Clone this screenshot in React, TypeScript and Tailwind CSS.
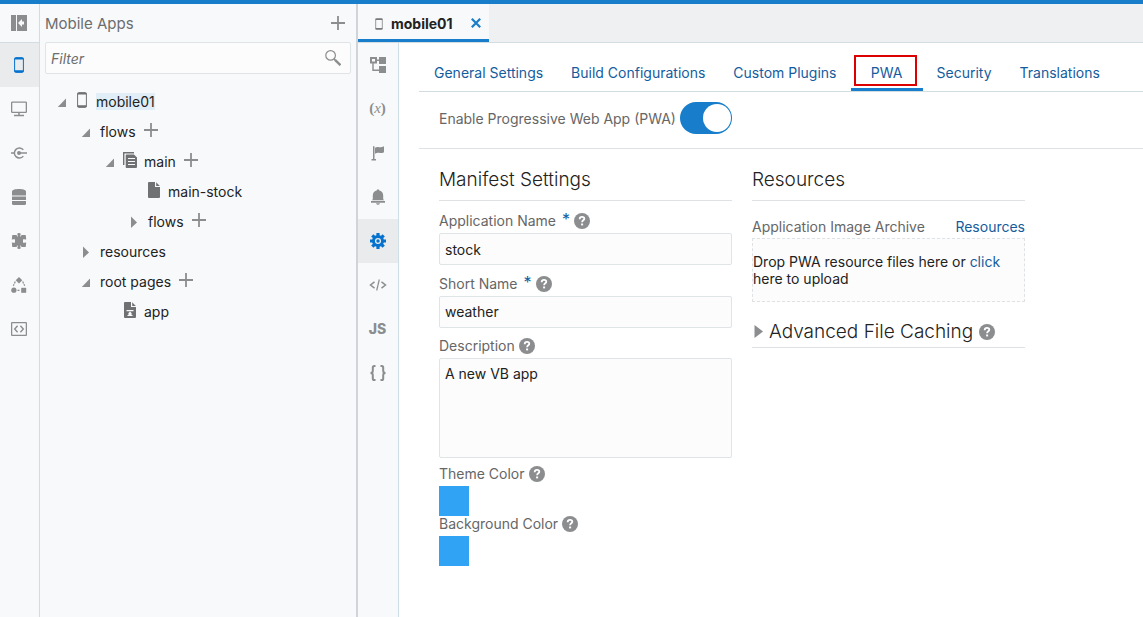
import React, { useState } from "react";

type IconProps = { className?: string };

const PhoneIcon = ({ className = "" }: IconProps) => (
  <svg className={className} width="16" height="16" viewBox="0 0 16 16" aria-hidden="true">
    <rect x="3.6" y="0.6" width="8.8" height="14.8" rx="1" fill="none" stroke="currentColor" strokeWidth="1" />
    <path d="M3.5 1h9v1.6h-9zM3.5 13.2h9V15h-9z" fill="currentColor" />
  </svg>
);

const CollapseIcon = () => (
  <svg width="16" height="16" viewBox="0 0 16 16" fill="currentColor" aria-hidden="true">
    <path d="M0 0h5v16H0zM6 0h10v16H6zM7 8l4-4v2.500h2v3h-2V12z" fillRule="evenodd" />
  </svg>
);

const MonitorIcon = () => (
  <svg width="16" height="16" viewBox="0 0 16 16" fill="none" stroke="currentColor" aria-hidden="true">
    <rect x="0.6" y="1.100" width="14.800" height="10.300" rx="0.800" strokeWidth="1.400" />
    <path d="M8 11v3M3 14.400h10" strokeWidth="1.500" />
  </svg>
);

const ServiceIcon = () => (
  <svg width="16" height="16" viewBox="0 0 16 16" fill="none" stroke="currentColor" aria-hidden="true">
    <path d="M0 8h3.500M8 8h8" strokeWidth="1.400" />
    <path d="M12.300 4.900A5 5 0 1 0 12.300 11.100" strokeWidth="1.500" />
    <circle cx="8" cy="8" r="2" fill="currentColor" stroke="none" />
  </svg>
);

const DatabaseIcon = () => (
  <svg width="16" height="16" viewBox="0 0 16 16" fill="currentColor" aria-hidden="true">
    <path d="M1 2.500C1 .9 4 0 8 0s7 .9 7 2.500V6.500H1zM1 7.500h14v3.500H1zM1 12h14v2.800q0 1.200-1.500 1.200h-11Q1 16 1 14.800z" />
  </svg>
);

const PuzzleIcon = () => (
  <svg width="16" height="16" viewBox="0 0 16 16" fill="currentColor" aria-hidden="true">
    <path d="M4 3.500h8v9H4z" />
    <path d="M1.300 2h4.200l1 2-1.500 2.500L3 6.200.8 6.500zM14.700 2h-4.200l-1 2L11 6.500l2-.3 2.200.3zM1.300 14h4.200l1-2L5 9.500l-2 .3-2.200-.3zM14.700 14h-4.200l-1-2L11 9.500l2 .3 2.200-.3z" />
    <path d="M6.300 1q0-1 1.700-1t1.700 1L8.900 4H7.100zM6.300 15q0 1 1.700 1t1.700-1l-.8-3H7.100z" />
  </svg>
);

const ProcessIcon = () => (
  <svg width="16" height="16" viewBox="0 0 16 16" fill="currentColor" aria-hidden="true">
    <path d="M8 0l3.300 3.200L8 6.400 4.700 3.200z" />
    <circle cx="2.900" cy="13.200" r="2.600" />
    <rect x="10.200" y="10.800" width="5" height="5" />
    <path d="M4.300 4.600L2.300 8.800M11.700 4.600l2 4.200M6.500 13.300h2.800" stroke="currentColor" strokeWidth="1.200" strokeDasharray="2 1" />
  </svg>
);

const CodeBoxIcon = () => (
  <svg width="16" height="16" viewBox="0 0 16 16" fill="none" stroke="currentColor" aria-hidden="true">
    <rect x="0.600" y="1.600" width="14.800" height="12.800" rx="0.500" strokeWidth="1.300" />
    <path d="M6.600 4.800L3.700 8l2.900 3.200M9.400 4.800L12.300 8l-2.900 3.200" strokeWidth="1.400" />
  </svg>
);

const StructureIcon = () => (
  <svg width="16" height="16" viewBox="0 0 16 16" fill="currentColor" aria-hidden="true">
    <path d="M0 0h7v6.500H0zM2 2v2.500h3V2z" fillRule="evenodd" />
    <rect x="9" y="0" width="7" height="7" />
    <rect x="9" y="9" width="7" height="7" />
    <path d="M6 3.300h4M3 6v7.200h7" fill="none" stroke="currentColor" strokeWidth="1.400" />
  </svg>
);

const VariableIcon = () => (
  <span aria-hidden="true" className="pb-0.5 font-['Liberation_Serif',serif] text-[15px] leading-4 font-bold">
    (<i className="font-normal">x</i>)
  </span>
);

const FlagIcon = () => (
  <svg width="16" height="16" viewBox="0 0 16 16" fill="currentColor" aria-hidden="true">
    <path d="M3 1.200h1.500V14H6v1.500H1.500V14H3z" />
    <path d="M5 2.700c1.500-1 3-.8 4-.5s3 .1 5-1v6c-2 1.200-3.800 1-5 .6s-2.500 0-4 1z" />
  </svg>
);

const BellIcon = () => (
  <svg width="16" height="16" viewBox="0 0 16 16" fill="currentColor" aria-hidden="true">
    <path d="M7 1.200a1 1 0 0 1 2 0c2.500.5 4.200 2.500 4.200 5v4l1 1H1.800l1-1v-4c0-2.500 1.700-4.500 4.200-5zM1 12h14v1.800H1zM6 14.300h4q-.5 1.500-2 1.500t-2-1.500z" />
  </svg>
);

const GearIcon = () => (
  <svg width="16" height="16" viewBox="0 0 16 16" aria-hidden="true">
    <g stroke="currentColor" strokeWidth="3.200">
      <path d="M8 0v16M0 8h16M2.300 2.300l11.400 11.400M13.700 2.300L2.300 13.700" />
    </g>
    <circle cx="8" cy="8" r="6" fill="currentColor" />
    <circle cx="8" cy="8" r="2.400" fill="currentColor" stroke="#e9ebed" strokeWidth="1.300" />
  </svg>
);

const TagsIcon = () => (
  <svg width="18" height="16" viewBox="0 0 18 16" fill="none" stroke="currentColor" aria-hidden="true">
    <path d="M5.500 4.800L1.500 8l4 3.200M12.500 4.800l4 3.200-4 3.200" strokeWidth="1.500" />
    <path d="M10.300 2.500L7.700 13.500" strokeWidth="1.200" />
  </svg>
);

const JsIcon = () => (
  <span aria-hidden="true" className="text-sm leading-4 font-extrabold">JS</span>
);

const BracesIcon = () => (
  <svg width="18" height="16" viewBox="0 0 18 16" fill="none" stroke="currentColor" strokeWidth="2" aria-hidden="true">
    <path d="M6.500 1H5.300Q3.800 1 3.800 2.600V5.800Q3.800 8 1.500 8 3.800 8 3.800 10.200v3.200Q3.800 15 5.300 15h1.200M11.500 1h1.200q1.500 0 1.500 1.600v3.200q0 2.200 2.300 2.200-2.300 0-2.300 2.200v3.200q0 1.600-1.500 1.600h-1.200" />
  </svg>
);

const PlusIcon = () => (
  <svg width="14" height="14" viewBox="0 0 14 14" stroke="currentColor" strokeWidth="1.800" aria-hidden="true">
    <path d="M7 0v14M0 7h14" />
  </svg>
);

const SearchIcon = () => (
  <svg width="16" height="16" viewBox="0 0 16 16" fill="none" stroke="currentColor" aria-hidden="true">
    <circle cx="5.600" cy="5.400" r="4.800" strokeWidth="1.200" />
    <path d="M9 9l1.500 1.500" strokeWidth="1.400" />
    <path d="M10 9.800l5.500 5.400" strokeWidth="2.400" />
  </svg>
);

const HelpIcon = () => (
  <svg width="16" height="16" viewBox="0 0 16 16" aria-hidden="true">
    <circle cx="8" cy="8" r="8" fill="#8b8d8f" />
    <path d="M5.700 6.200C5.700 4.700 6.600 3.900 8 3.900s2.300.8 2.300 1.900c0 1.500-2.200 1.600-2.200 3.400" fill="none" stroke="#fff" strokeWidth="1.800" />
    <rect x="7.100" y="10.500" width="2" height="1.900" fill="#fff" />
  </svg>
);

const PagesIcon = () => (
  <svg width="16" height="16" viewBox="0 0 16 16" fill="currentColor" aria-hidden="true">
    <path d="M1 0h11v1.400H2.400V13H1z" />
    <path d="M4.500 2.500H12L15 5.500V15q0 1-1 1H4.500q-.8 0-.8-1V3.300q0-.8.800-.8zM6 6v1h7V6zM6 9v1h7V9zM6 12v1h7v-1z" fillRule="evenodd" />
  </svg>
);

const FileIcon = () => (
  <svg width="16" height="16" viewBox="0 0 16 16" fill="currentColor" aria-hidden="true">
    <path d="M2 1q0-1 1-1h6v5h5v10q0 1-1 1H3q-1 0-1-1z" />
    <path d="M10.200.200L13.800 4h-3.600z" />
  </svg>
);

const RootFileIcon = () => (
  <svg width="16" height="16" viewBox="0 0 16 16" fill="currentColor" aria-hidden="true">
    <path d="M2 1q0-1 1-1h6v5h5v10q0 1-1 1H3q-1 0-1-1zM4.500 8v1.300h7V8zM8 9.500l-2.200 2.300h1.400L5 14h6l-2.200-2.200h1.400z" fillRule="evenodd" />
    <path d="M10.200.200L13.800 4h-3.600z" />
  </svg>
);

const Arrow = ({ open }: { open: boolean }) => (
  <svg width="10" height="12" viewBox="0 0 10 12" fill="#8b8d8f" aria-hidden="true">
    {open ? <path d="M9 2.500V11H.8z" /> : <path d="M2 .5L8 6.500 2 12z" />}
  </svg>
);

type Tool = { label: string; icon: React.ReactNode };

const navTools: Tool[] = [
  { label: "Mobile Apps", icon: <PhoneIcon /> },
  { label: "Web Apps", icon: <MonitorIcon /> },
  { label: "Services", icon: <ServiceIcon /> },
  { label: "Business Objects", icon: <DatabaseIcon /> },
  { label: "Components", icon: <PuzzleIcon /> },
  { label: "Processes", icon: <ProcessIcon /> },
  { label: "Source", icon: <CodeBoxIcon /> },
];

const editorTools: Tool[] = [
  { label: "Structure", icon: <StructureIcon /> },
  { label: "Variables", icon: <VariableIcon /> },
  { label: "Actions", icon: <FlagIcon /> },
  { label: "Events", icon: <BellIcon /> },
  { label: "Settings", icon: <GearIcon /> },
  { label: "HTML", icon: <TagsIcon /> },
  { label: "JavaScript", icon: <JsIcon /> },
  { label: "JSON", icon: <BracesIcon /> },
];

function ToolButtons({ tools, active }: { tools: Tool[]; active: string }) {
  return (
    <>
      {tools.map((t) => (
        <button
          key={t.label}
          type="button"
          aria-label={t.label}
          className={
            t.label === active
              ? "flex h-11 w-full items-center justify-center bg-[#e9ebed] pr-px text-[#0572ce]"
              : "flex h-11 w-full items-center justify-center pr-px text-[#8b8d8f]"
          }
        >
          {t.icon}
        </button>
      ))}
    </>
  );
}

type Node = {
  name: string;
  indent: string;
  open?: boolean;
  icon?: React.ReactNode;
  add?: boolean;
  selected?: boolean;
};

const nodes: Node[] = [
  { name: "mobile01", indent: "pl-0", open: true, icon: <PhoneIcon />, selected: true },
  { name: "flows", indent: "pl-6", open: true, add: true },
  { name: "main", indent: "pl-12", open: true, icon: <PagesIcon />, add: true },
  { name: "main-stock", indent: "pl-[72px]", icon: <FileIcon /> },
  { name: "flows", indent: "pl-[72px]", open: false, add: true },
  { name: "resources", indent: "pl-6", open: false },
  { name: "root pages", indent: "pl-6", open: true, add: true },
  { name: "app", indent: "pl-12", icon: <RootFileIcon /> },
];

function Tree() {
  return (
    <ul className="pt-3 pl-2.5">
      {nodes.map((n, i) => (
        <li key={i} className={n.indent}>
          <div className="flex h-[30px] items-center">
            <span className="flex w-6 justify-center pt-0.5">{n.open !== undefined && <Arrow open={n.open} />}</span>
            {n.icon ? <span className="mr-1.5 pb-0.5 text-[#6f7173]">{n.icon}</span> : <span className="w-0.5" />}
            <span className={n.selected ? "bg-[#e1eef8] leading-[17px]" : "leading-[17px]"}>{n.name}</span>
            {n.add && (
              <button type="button" aria-label={"Add to " + n.name} className="ml-2 pb-0.5 text-[#8b8d8f]">
                <PlusIcon />
              </button>
            )}
          </div>
        </li>
      ))}
    </ul>
  );
}

const tabs = ["General Settings", "Build Configurations", "Custom Plugins", "PWA", "Security", "Translations"];

function FieldLabel({ id, text, required }: { id: string; text: string; required?: boolean }) {
  return (
    <div className="flex h-[22px] items-center pb-0.5 leading-4 text-[#666]">
      <label htmlFor={id} className="flex">
        {text}
        {required && <span className="pl-1.5 text-base leading-3 text-[#145c9e]">*</span>}
      </label>
      <button type="button" aria-label={"Help for " + text} className="ml-1">
        <HelpIcon />
      </button>
    </div>
  );
}

const boxClass = "block w-full rounded-xs border border-[#dfe4e7] bg-[#fcfcfc] px-[5px] text-[#222] outline-none";
const headingClass = "border-b border-[#dfe2e4] text-[19px] leading-7 font-light text-[#222]";
const swatchClass =
  "block size-[30px] appearance-none border-0 bg-[#30a3f5] p-0 [&::-webkit-color-swatch]:rounded-none [&::-webkit-color-swatch]:border-0 [&::-webkit-color-swatch-wrapper]:p-0";

function Manifest() {
  return (
    <section>
      <h2 className={headingClass + " pt-[17px] pb-1.5"}>Manifest Settings</h2>
      <div className="mt-2.5">
        <FieldLabel id="app-name" text="Application Name" required />
        <input id="app-name" type="text" defaultValue="stock" className={boxClass + " h-8"} />
      </div>
      <div className="mt-[9px]">
        <FieldLabel id="short-name" text="Short Name" required />
        <input id="short-name" type="text" defaultValue="weather" className={boxClass + " h-8 pb-0.5"} />
      </div>
      <div className="mt-2">
        <FieldLabel id="description" text="Description" />
        <textarea id="description" defaultValue="A new VB app" className={boxClass + " h-[100px] resize-none py-1.5 leading-[18px]"} />
      </div>
      <div className="mt-1.5">
        <FieldLabel id="theme" text="Theme Color" />
        <input id="theme" type="color" defaultValue="#30a3f5" className={swatchClass} />
      </div>
      <div className="-mt-0.5">
        <FieldLabel id="background" text="Background Color" />
        <input id="background" type="color" defaultValue="#30a3f5" className={swatchClass} />
      </div>
    </section>
  );
}

function Resources() {
  return (
    <section>
      <h2 className={headingClass + " pt-[17px] pb-1.5"}>Resources</h2>
      <div className="mt-[17px] flex h-5 items-center justify-between pb-0.5 leading-[18px] text-[#666]">
        <span>Application Image Archive</span>
        <a href="#resources" className="text-[#145c9e]">Resources</a>
      </div>
      <div className="flex h-16 items-center border border-dashed border-[#dfe2e4] bg-[#fcfcfc] leading-[17px] text-[#222]">
        <p>
          Drop PWA resource files here or <a href="#upload" className="text-[#145c9e]">click</a>
          <br />
          here to upload
        </p>
      </div>
      <h2 className={headingClass + " mt-4 flex items-center pb-px"}>
        <button type="button" className="flex items-center gap-1.5">
          <svg width="11" height="14" viewBox="0 0 11 14" fill="#8b8d8f" aria-hidden="true">
            <path d="M2.500 0L11 6.500 2.500 13z" />
          </svg>
          Advanced File Caching
        </button>
        <button type="button" aria-label="Help for Advanced File Caching" className="ml-1.5">
          <HelpIcon />
        </button>
      </h2>
    </section>
  );
}

export default function App() {
  const [enabled, setEnabled] = useState(true);
  return (
    <div className="flex min-h-screen flex-col border-t-4 border-[#187dca] bg-[#f8f9fb] font-['Inter','Liberation_Sans',sans-serif] text-sm text-[#222]">
      <div className="flex grow">
        <nav aria-label="Artifacts" className="w-10 shrink-0 border-r border-[#d1dde3]">
          <button type="button" aria-label="Collapse panel" className="flex h-[39px] w-full items-center justify-center border-b border-[#d1dde3] pr-px text-[#8b8d8f]">
            <CollapseIcon />
          </button>
          <ToolButtons tools={navTools} active="Mobile Apps" />
        </nav>

        <aside className="w-[318px] shrink-0 border-r-2 border-[#d0d4d8]">
          <header className="flex h-[38px] items-center justify-between pr-[11px] pl-[5px] text-[#6b6d6f]">
            <h1 className="pt-0.5 text-[15px]">Mobile Apps</h1>
            <button type="button" aria-label="Add mobile app" className="text-[#8b8d8f]">
              <PlusIcon />
            </button>
          </header>
          <div className="mr-[5px] ml-[5px] flex h-8 items-center rounded-xs border border-[#dfe4e7] bg-[#fcfcfc] pr-[9px] pl-[5px] text-[#8b8d8f]">
            <input type="text" aria-label="Filter" placeholder="Filter" className="min-w-0 grow bg-transparent pt-0.5 outline-none placeholder:text-[#6b6d6f] placeholder:italic" />
            <SearchIcon />
          </div>
          <Tree />
        </aside>

        <main className="flex min-w-0 grow flex-col">
          <div className="flex h-[39px] border-b border-[#d1dde3] bg-[#eff0f2]">
            <div className="flex items-center border-b-3 border-[#187dca] bg-[#f8f9fb] pt-1 pr-2 pl-[15px]">
              <PhoneIcon className="size-3 shrink-0 text-[#77797b]" />
              <span className="ml-1.5 font-bold">mobile01</span>
              <button type="button" aria-label="Close mobile01" className="ml-[18px] pb-0.5 text-[#187dca]">
                <svg width="10" height="10" viewBox="0 0 10 10" stroke="currentColor" strokeWidth="2.200" aria-hidden="true">
                  <path d="M.8.800l8.400 8.400M9.200.8L.8 9.200" />
                </svg>
              </button>
            </div>
          </div>
          <div className="flex grow">
            <nav aria-label="Editors" className="w-[41px] shrink-0 border-r border-[#cfdfe6]">
              <ToolButtons tools={editorTools} active="Settings" />
            </nav>
            <div className="min-w-0 grow bg-white pl-5">
              <div role="tablist" className="flex h-[49px] border-b border-[#d1dde3] pl-px">
                {tabs.map((t) => (
                  <button
                    key={t}
                    type="button"
                    role="tab"
                    aria-selected={t === "PWA"}
                    className={
                      t === "PWA"
                        ? "relative min-w-[72px] border-b-3 border-[#187dca] px-3.5 pt-[15px] whitespace-nowrap text-[#145c9e]"
                        : "border-b-3 border-transparent px-3.5 pt-[15px] whitespace-nowrap text-[#145c9e]"
                    }
                  >
                    {t}
                    {t === "PWA" && <span className="absolute top-3 left-[3px] h-[31px] w-[63px] border-2 border-[#dd0000]" />}
                  </button>
                ))}
              </div>
              <div className="flex h-[57px] items-center border-b border-[#dfe2e4] pb-1 pl-5">
                <label htmlFor="enable-pwa" className="pt-0.5 text-[#666]">Enable Progressive Web App (PWA)</label>
                <input
                  id="enable-pwa"
                  type="checkbox"
                  role="switch"
                  checked={enabled}
                  onChange={(e) => setEnabled(e.target.checked)}
                  className="ml-1 h-8 w-13 appearance-none rounded-full bg-[#b8bcbf] p-px pt-0.5 before:block before:size-7 before:rounded-full before:bg-white checked:bg-[#187dca] checked:before:ml-auto"
                />
              </div>
              <div className="grid max-w-[606px] grid-cols-[293fr_273fr] gap-5 pl-5">
                <Manifest />
                <Resources />
              </div>
            </div>
          </div>
        </main>
      </div>
    </div>
  );
}
